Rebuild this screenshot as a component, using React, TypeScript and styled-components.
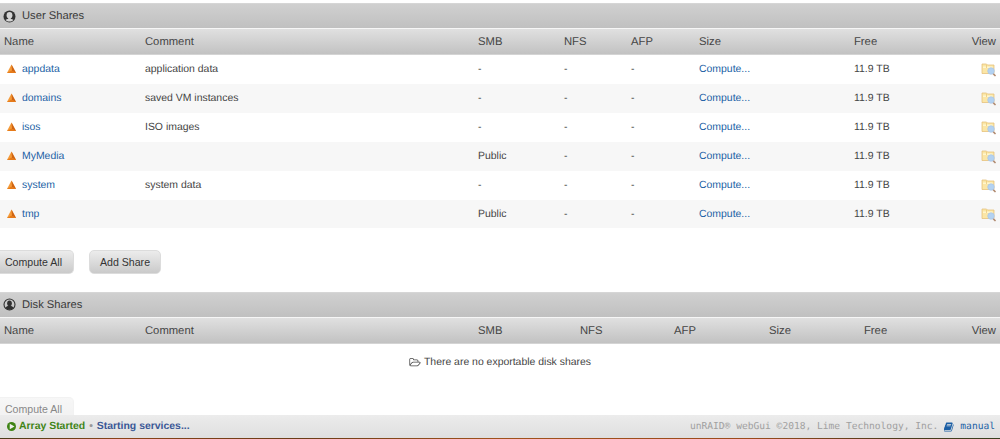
import React from "react";
import styled, { createGlobalStyle } from "styled-components";

const Global = createGlobalStyle`
  * { box-sizing: border-box; }
  body {
    margin: 0;
    overflow: hidden;
    background: #fff;
    color: #444;
    font: 10.45px/15px "Liberation Sans", Arial, sans-serif;
    text-rendering: geometricPrecision;
  }
`;

const Page = styled.div`
  display: flex;
  flex-direction: column;
  height: 439px;
  padding-top: 3px;
  overflow: hidden;
`;

const TitleBar = styled.h2`
  display: flex;
  align-items: center;
  flex: none;
  gap: 6px;
  height: 25px;
  margin: 0;
  padding: 0 3px;
  border-top: 1px solid #d6d6d6;
  background: linear-gradient(#d0d0d0, #c0c0c0);
  font-size: 11.2px;
  line-height: 14px;
  font-weight: 400;
  color: #3a3a3a;
`;

const userColumns = "145px 333px 86px 67px 68px 155px 1fr";
const diskColumns = "145px 333px 102px 94px 95px 95px 1fr";

const HeadRow = styled.div<{ $columns: string }>`
  display: grid;
  grid-template-columns: ${(p) => p.$columns} auto;
  align-items: center;
  flex: none;
  height: 27px;
  padding: 2px 4px 0 0;
  border-top: 1px solid #f6f6f6;
  border-bottom: 1px solid #d4d4d4;
  background: linear-gradient(#e0e0e0, #c2c2c2);
  font-size: 11.25px;
  color: #444;
`;

const HeadCell = styled.span`
  &:first-child { padding-left: 4px; }
`;

const Rows = styled.div`
  flex: none;
  height: 173.5px;
  display: grid;
  grid-template-rows: repeat(6, 1fr);
`;

const Row = styled.div`
  display: grid;
  grid-template-columns: ${userColumns} auto;
  align-items: center;
  padding: 1px 4px 0 0;
  &:nth-child(even) { background: #f7f7f7; }
`;

const NameCell = styled.span`
  display: flex;
  align-items: center;
  gap: 5px;
  padding-left: 6px;
`;

const Link = styled.a`
  color: #1b5fa5;
`;

const Buttons = styled.div<{ $faded?: boolean }>`
  display: flex;
  flex: none;
  gap: 15px;
  height: ${(p) => (p.$faded ? "18px" : "24px")};
  margin-top: ${(p) => (p.$faded ? "0" : "21px")};
  margin-bottom: ${(p) => (p.$faded ? "0" : "18px")};
  overflow: ${(p) => (p.$faded ? "hidden" : "visible")};
  opacity: ${(p) => (p.$faded ? 0.7 : 1)};
`;

const Button = styled.button<{ $edge?: boolean; $disabled?: boolean }>`
  height: 24px;
  flex: none;
  width: ${(p) => (p.$edge ? "74px" : "72px")};
  padding: 0;
  padding-right: ${(p) => (p.$edge ? "6px" : "0")};
  border: 1px solid ${(p) => (p.$disabled ? "#ededed" : "#dcdcdc")};
  border-left-width: ${(p) => (p.$edge ? "0" : "1px")};
  border-radius: ${(p) => (p.$edge ? "0 5px 5px 0" : "5px")};
  background: ${(p) =>
    p.$disabled ? "linear-gradient(#f4f4f4, #ececec)" : "linear-gradient(#ececec, #cacaca)"};
  font: 10.6px "Liberation Sans", Arial, sans-serif;
  color: ${(p) => (p.$disabled ? "#555" : "#333")};
`;

const Empty = styled.div`
  display: flex;
  align-items: center;
  justify-content: center;
  flex: none;
  gap: 3px;
  height: 36px;
  padding-top: 1px;
  margin-bottom: 17px;
`;

const Footer = styled.footer`
  display: flex;
  align-items: center;
  justify-content: space-between;
  flex: none;
  height: 23px;
  padding: 1px 5px 0 7px;
  background: linear-gradient(#ececec, #dfdfdf);
`;

const Status = styled.div`
  display: flex;
  align-items: center;
  font-weight: 700;
  color: #3f8416;
`;

const Dot = styled.span`
  margin: 0 4px;
  color: #999;
`;

const Service = styled.span`
  color: #3a5896;
`;

const Credit = styled.div`
  display: flex;
  align-items: center;
  font: 9.6px/15px "DejaVu Sans Mono", monospace;
  color: #a0a0a0;
  white-space: pre;
`;

const Wallpaper = styled.div`
  flex: none;
  height: 1px;
  background: linear-gradient(90deg, #4a3b1a, #8a4318 12%, #6a3c18 30%, #a0521c 50%, #9b4a1b 75%, #4c3a1c 90%, #38401f);
`;

const UserIcon = ({ filled }: { filled?: boolean }) => (
  <svg width="13" height="13" viewBox="0 0 26 26">
    {filled ? (
      <>
        <circle cx="13" cy="13" r="11" fill="none" stroke="#303030" strokeWidth="2.200" />
        <ellipse cx="13" cy="10.500" rx="4.700" ry="5.700" fill="#303030" />
        <path d="M5 20c1-3.300 4-3.500 6-4.500h4c2 1 5 1.200 6 4.500-4 4.500-12 4.500-16 0z" fill="#303030" />
      </>
    ) : (
      <>
        <circle cx="13" cy="13" r="12" fill="#333" />
        <ellipse cx="13" cy="10.500" rx="5.800" ry="6.500" fill="#d4d4d4" />
        <path d="M10.500 15h5v2.500c1.500.8 4 .9 5.200 2.300-4 4-11.400 4-15.400 0 1.200-1.400 3.700-1.500 5.200-2.300z" fill="#d4d4d4" />
      </>
    )}
  </svg>
);

const WarningIcon = () => (
  <svg width="11" height="11" viewBox="0 0 22 22">
    <path d="M11 1L2 18h18z" fill="#f49a38" />
    <path d="M11 1l9 17-8-4z" fill="#cf6414" />
    <path d="M2 18l9-5 9 5z" fill="#e67a19" />
  </svg>
);

const ExploreIcon = () => (
  <svg width="15" height="15" viewBox="0 0 30 30">
    <path d="M2 4h9l2 2h13v17H2z" fill="#fbe6a6" stroke="#e4bf78" strokeWidth="1.500" />
    <path d="M4 9h19v3H4z" fill="#fff6cf" />
    <path d="M11 6v6" stroke="#e8c778" strokeWidth="1.500" />
    <path d="M24 23l4 4" stroke="#b08a70" strokeWidth="3.500" strokeLinecap="round" />
    <circle cx="20" cy="18" r="6.500" fill="#b3d2f2" stroke="#a9c6e6" strokeWidth="1.500" />
  </svg>
);

const FolderIcon = () => (
  <svg width="12" height="11" viewBox="0 0 2048 1792">
    <path
      fill="#444"
      d="M1845 931q0-35-53-35h-1088q-40 0-85.500 21.500t-71.500 52.500l-294 363q-18 24-18 40 0 35 53 35h1088q40 0 86-22t71-53l294-363q18-22 18-39zm-1141-163h768v-160q0-40-28-68t-68-28h-576q-40 0-68-28t-28-68v-64q0-40-28-68t-68-28h-320q-40 0-68 28t-28 68v853l256-315q44-53 116-87.500t140-34.500zm1269 163q0 62-46 120l-295 363q-43 53-116 87.500t-140 34.500h-1088q-92 0-158-66t-66-158v-960q0-92 66-158t158-66h320q92 0 158 66t66 158v32h544q92 0 158 66t66 158v160h192q54 0 99 24.500t67 70.500q15 32 15 68z"
    />
  </svg>
);

const PlayIcon = styled.svg`
  margin-right: 3px;
`;

const BookIcon = styled.svg`
  margin: 0 6px;
`;

const shares = [
  { name: "appdata", comment: "application data", smb: "-" },
  { name: "domains", comment: "saved VM instances", smb: "-" },
  { name: "isos", comment: "ISO images", smb: "-" },
  { name: "MyMedia", comment: "", smb: "Public" },
  { name: "system", comment: "system data", smb: "-" },
  { name: "tmp", comment: "", smb: "Public" },
];

const headings = ["Name", "Comment", "SMB", "NFS", "AFP", "Size", "Free", "View"];

const TableHead = ({ columns }: { columns: string }) => (
  <HeadRow $columns={columns}>
    {headings.map((h) => (
      <HeadCell key={h}>{h}</HeadCell>
    ))}
  </HeadRow>
);

export default function App() {
  return (
    <Page>
      <Global />
      <TitleBar>
        <UserIcon />
        User Shares
      </TitleBar>
      <TableHead columns={userColumns} />
      <Rows>
        {shares.map((s) => (
          <Row key={s.name}>
            <NameCell>
              <WarningIcon />
              <Link>{s.name}</Link>
            </NameCell>
            <span>{s.comment}</span>
            <span>{s.smb}</span>
            <span>-</span>
            <span>-</span>
            <Link>Compute...</Link>
            <span>11.9 TB</span>
            <ExploreIcon />
          </Row>
        ))}
      </Rows>
      <Buttons>
        <Button $edge>Compute All</Button>
        <Button>Add Share</Button>
      </Buttons>
      <TitleBar>
        <UserIcon filled />
        Disk Shares
      </TitleBar>
      <TableHead columns={diskColumns} />
      <Empty>
        <FolderIcon />
        There are no exportable disk shares
      </Empty>
      <Buttons $faded>
        <Button $edge $disabled>
          Compute All
        </Button>
      </Buttons>
      <Footer>
        <Status>
          <PlayIcon width="9" height="9" viewBox="0 0 18 18">
            <circle cx="9" cy="9" r="9" fill="#3f8416" />
            <path d="M5.500 3.500v11l9.500-5.500z" fill="#f0f0f0" />
          </PlayIcon>
          Array Started
          <Dot>•</Dot>
          <Service>Starting services...</Service>
        </Status>
        <Credit>
          unRAID® webGui ©2018, Lime Technology, Inc.
          <BookIcon width="10" height="10" viewBox="64 128 1664 1536">
            <path
              fill="#1b5fa5"
              d="M1639 478q40 57 18 129l-275 906q-19 64-76.500 107.500t-122.500 43.500h-923q-77 0-148.500-53.500t-99.500-131.500q-24-67-2-127 0-4 3-27t4-37q1-8-3-21.500t-3-19.500q2-11 8-21t16.500-23.500 16.500-23.500q23-38 45-91.500t30-91.500q3-10 .5-30t-.5-28q3-11 17-28t17-23q21-36 42-92t25-90q1-9-2.500-32t.5-28q4-13 22-30.500t22-22.500q19-26 42.500-84.500t27.500-96.500q1-8-3-25.500t-2-26.500q2-8 9-18t18-23 17-21q8-12 16.500-30.500t15-35 16-36 19.500-32 26.500-23.500 36-11.500 47.500 5.500l-1 3q38-9 51-9h761q74 0 114 56t18 130l-274 906q-36 119-71.500 153.500t-128.500 34.500h-869q-27 0-38 15-11 16-1 43 24 70 144 70h923q29 0 56-15.500t35-41.500l300-987q7-22 5-57 38 15 59 43zm-1064 2q-4 13 2 22.500t20 9.500h608q13 0 25.500-9.500t16.500-22.500l21-64q4-13-2-22.500t-20-9.500h-608q-13 0-25.500 9.500t-16.500 22.500zm-83 256q-4 13 2 22.500t20 9.500h608q13 0 25.500-9.500t16.500-22.500l21-64q4-13-2-22.500t-20-9.500h-608q-13 0-25.500 9.500t-16.500 22.500z"
            />
          </BookIcon>
          <Link>manual</Link>
        </Credit>
      </Footer>
      <Wallpaper />
    </Page>
  );
}
